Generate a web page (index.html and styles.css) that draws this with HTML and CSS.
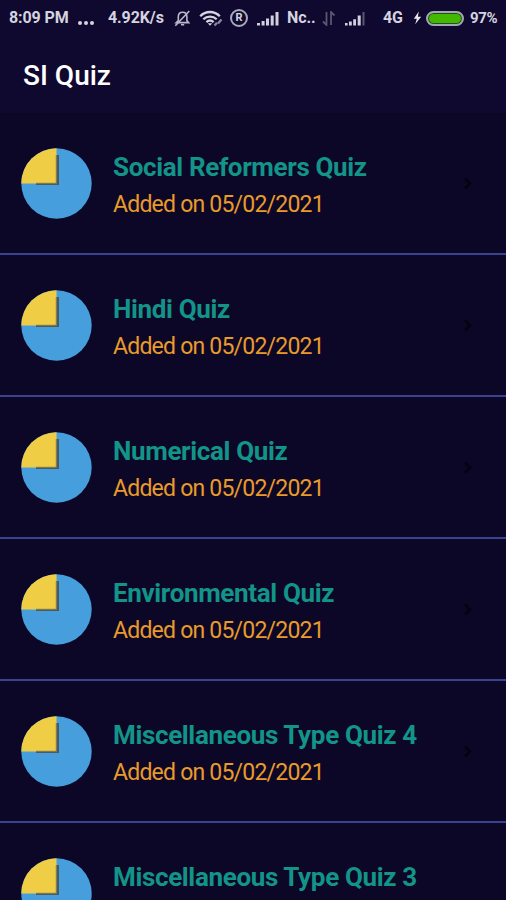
FILE: index.html
```html
<!DOCTYPE html>
<html lang="en">
<head>
    <meta charset="UTF-8">
    <meta name="viewport" content="width=device-width, initial-scale=1.0">
    <title>SI Quiz</title>
    <link rel="stylesheet" href="styles.css">
</head>
<body>
    <!-- Shared icons -->
    <svg class="sprite" width="0" height="0">
        <symbol id="pie" viewBox="0 0 71 71">
            <circle cx="35.5" cy="35.5" r="35.2" fill="#469fdc"/>
            <path d="M36 7h2v30H15v-2h21z" fill="#4b5960"/>
            <path d="M35.5 35.5V.3A35.2 35.2 0 0 0 .3 35.5z" fill="#efcd45"/>
            <path d="M35.3 7v28.3H15" fill="none" stroke="#77734c" stroke-width="1"/>
        </symbol>
        <symbol id="chevron" viewBox="0 0 10 14">
            <path d="M2 1.500l5 5-5 5" fill="none" stroke="#040310" stroke-width="2.8"/>
        </symbol>
    </svg>

    <div class="status-bar">
        <span class="time">8:09 PM</span>
        <span class="dots"><i></i><i></i><i></i></span>
        <span class="speed">4.92K/s</span>
        <svg class="bell" width="17" height="17" viewBox="0 0 17 17" fill="none" stroke="#b9b7c8" stroke-width="1.6">
            <path d="M2.2 12.6h12.4l-1.7-2V6.8C12.900 4 11 2.200 8.600 2.200S4.300 4 4.300 6.800v3.800z"/>
            <path d="M7 14.800h3.200M15.300 1L1.300 15.800"/>
        </svg>
        <svg class="wifi" width="24" height="17" viewBox="0 0 24 17" fill="none" stroke="#d5d3df" stroke-width="2.3">
            <path d="M1.200 6.200C6.500.600 15.500.600 20.800 6.200M4.300 9.300c3.800-3.700 9.600-3.700 13.400 0M7.400 12.200c2.200-2 5-2 7.200 0"/>
            <path d="M8.800 13.200L11 15.800l2.200-2.600z" fill="#d5d3df" stroke="none"/>
            <path d="M15.500 15.500l2.500-2.700M19 13.500l3.500-4" stroke="#8c899f"/>
        </svg>
        <span class="registered">R</span>
        <svg class="signal" width="22" height="15" viewBox="0 0 22 15" fill="#d2d0dc">
            <path d="M0 12h3v2.500H0zM4.600 10h3v4.500h-3zM9 7.500h3v7H9zM13.700 4.500h3v10h-3zM18.500 1h3v13.500h-3z"/>
        </svg>
        <span class="carrier">Nc..</span>
        <svg class="data" width="14" height="15" viewBox="0 0 14 15" fill="none" stroke="#5a5773" stroke-width="1.800">
            <path d="M4.500 1v13L1 10.500M9 14V1l3.500 3.500"/>
        </svg>
        <svg class="signal-two" width="22" height="15" viewBox="0 0 22 15" fill="#d2d0dc">
            <path d="M0 12h2.600v2.500H0zM4 10.500h2.800v4H4zM8.200 8.300h2.800v6.200H8.200zM12.700 4.500h3v10h-3z"/>
            <path d="M17.500 1h2v13.500h-2z" fill="#5a5773"/>
        </svg>
        <span class="network">4G</span>
        <svg class="bolt" width="9" height="14" viewBox="0 0 9 14" fill="#e8e7ef">
            <path d="M5.800.500L.800 7.700h3L2.200 13.300 8.200 5.800H4.900z"/>
        </svg>
        <span class="battery"></span>
        <span class="percent">97%</span>
    </div>

    <header>
        <h1>SI Quiz</h1>
    </header>

    <ul class="quiz-list">
        <li class="quiz">
            <svg class="pie"><use href="#pie"/></svg>
            <div class="info">
                <h2>Social Reformers Quiz</h2>
                <p>Added on 05/02/2021</p>
            </div>
            <svg class="chevron"><use href="#chevron"/></svg>
        </li>
        <li class="quiz">
            <svg class="pie"><use href="#pie"/></svg>
            <div class="info">
                <h2>Hindi Quiz</h2>
                <p>Added on 05/02/2021</p>
            </div>
            <svg class="chevron"><use href="#chevron"/></svg>
        </li>
        <li class="quiz">
            <svg class="pie"><use href="#pie"/></svg>
            <div class="info">
                <h2>Numerical Quiz</h2>
                <p>Added on 05/02/2021</p>
            </div>
            <svg class="chevron"><use href="#chevron"/></svg>
        </li>
        <li class="quiz">
            <svg class="pie"><use href="#pie"/></svg>
            <div class="info">
                <h2>Environmental Quiz</h2>
                <p>Added on 05/02/2021</p>
            </div>
            <svg class="chevron"><use href="#chevron"/></svg>
        </li>
        <li class="quiz">
            <svg class="pie"><use href="#pie"/></svg>
            <div class="info">
                <h2>Miscellaneous Type Quiz 4</h2>
                <p>Added on 05/02/2021</p>
            </div>
            <svg class="chevron"><use href="#chevron"/></svg>
        </li>
        <li class="quiz">
            <svg class="pie"><use href="#pie"/></svg>
            <div class="info">
                <h2>Miscellaneous Type Quiz 3</h2>
            </div>
        </li>
    </ul>
</body>
</html>
```
FILE: styles.css
```css
:root {
    --bar-color: #0f0930;
    --page-color: #0c0727;
    --title-color: #139488;
    --date-color: #e89a2b;
    --line-color: #3c4291;
    --status-color: #d5d3df;
}

* {
    margin: 0;
    padding: 0;
    box-sizing: border-box;
}

html {
    height: 100%;
    overflow: hidden;
}

body {
    height: 100%;
    display: flex;
    flex-direction: column;
    background: var(--page-color);
    font-family: Roboto, sans-serif;
}

svg {
    flex-shrink: 0;
}

.sprite {
    position: absolute;
}

/* Status bar */
.status-bar {
    height: 36px;
    flex-shrink: 0;
    display: flex;
    align-items: center;
    padding-left: 9px;
    background: var(--bar-color);
    color: var(--status-color);
    font-size: 16px;
    font-weight: 700;
    line-height: 36px;
    letter-spacing: -0.1px;
    white-space: nowrap;
}

.status-bar span {
    flex-shrink: 0;
}

.time {
    width: 69px;
}

.status-bar .dots {
    width: 30px;
    display: flex;
    gap: 2px;
    padding-top: 9px;
}

.dots i {
    width: 4px;
    height: 4px;
    border-radius: 50%;
    background: var(--status-color);
}

.speed {
    width: 66px;
}

.bell {
    margin-right: 8px;
}

.wifi {
    margin-right: 7px;
}

.registered {
    width: 18px;
    height: 18px;
    margin-right: 9px;
    border: 2px solid #aaa8bb;
    border-radius: 50%;
    font-size: 11px;
    line-height: 14px;
    text-align: center;
}

.signal {
    margin: 1px 8px 0 0;
}

.carrier {
    width: 35px;
}

.data {
    margin-right: 9px;
}

.signal-two {
    margin: 1px 16px 0 0;
}

.network {
    width: 30px;
}

.bolt {
    margin-right: 4px;
}

.battery {
    width: 38px;
    height: 15px;
    margin-right: 6px;
    border: 2px solid #a5a4b2;
    border-radius: 8px;
    background: #42b900;
    box-shadow: inset 0 0 0 1px #254f23;
}

.percent {
    font-size: 15px;
    letter-spacing: -0.3px;
}

/* App bar */
header {
    height: 77px;
    flex-shrink: 0;
    display: flex;
    align-items: center;
    padding: 2px 23px 0;
    background: var(--bar-color);
}

h1 {
    color: #fff;
    font-size: 28px;
    font-weight: 500;
}

/* Quiz list */
.quiz-list {
    flex: 1;
    min-height: 0;
    overflow: hidden;
    list-style: none;
}

.quiz {
    height: 142px;
    display: flex;
    align-items: flex-start;
    padding: 35px 33px 0 21px;
    border-bottom: 2px solid var(--line-color);
}

.pie {
    width: 71px;
    height: 71px;
}

.info {
    flex: 1;
    margin-left: 21px;
    padding-top: 2px;
}

.info h2 {
    color: var(--title-color);
    font-size: 26px;
    font-weight: 700;
    line-height: 34px;
    letter-spacing: -0.35px;
    white-space: nowrap;
}

.info p {
    margin-top: 6px;
    color: var(--date-color);
    font-size: 23px;
    line-height: 30px;
    letter-spacing: -0.78px;
}

.chevron {
    width: 10px;
    height: 14px;
    margin-top: 29px;
}
```
